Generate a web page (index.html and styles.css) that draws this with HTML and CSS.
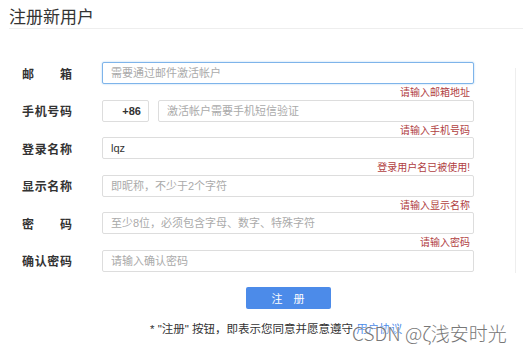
FILE: index.html
```html
<!DOCTYPE html>
<html lang="zh-CN">
<head>
  <meta charset="UTF-8">
  <meta name="viewport" content="width=device-width, initial-scale=1.0">
  <title>注册新用户</title>
  <link rel="stylesheet" href="styles.css">
</head>
<body>
  <div class="page">
    <h1 class="title">注册新用户</h1>
    <div class="content">
      <form class="form">
        <div class="field">
          <div class="field-row">
            <label class="label">邮箱</label>
            <input class="input input-focus" type="text" placeholder="需要通过邮件激活帐户">
          </div>
          <div class="tip">请输入邮箱地址</div>
        </div>
        <div class="field">
          <div class="field-row">
            <label class="label">手机号码</label>
            <div class="phone">
              <span class="prefix">+86</span>
              <input class="input" type="text" placeholder="激活帐户需要手机短信验证">
            </div>
          </div>
          <div class="tip">请输入手机号码</div>
        </div>
        <div class="field">
          <div class="field-row">
            <label class="label">登录名称</label>
            <input class="input" type="text" value="lqz">
          </div>
          <div class="tip">登录用户名已被使用!</div>
        </div>
        <div class="field">
          <div class="field-row">
            <label class="label">显示名称</label>
            <input class="input" type="text" placeholder="即昵称，不少于2个字符">
          </div>
          <div class="tip">请输入显示名称</div>
        </div>
        <div class="field">
          <div class="field-row">
            <label class="label">密码</label>
            <input class="input" type="password" placeholder="至少8位，必须包含字母、数字、特殊字符">
          </div>
          <div class="tip">请输入密码</div>
        </div>
        <div class="field">
          <div class="field-row">
            <label class="label">确认密码</label>
            <input class="input" type="password" placeholder="请输入确认密码">
          </div>
        </div>
        <div class="actions">
          <button class="btn" type="button">注 册</button>
          <p class="agree">* "注册" 按钮，即表示您同意并愿意遵守 <a href="#">用户协议</a></p>
        </div>
      </form>
      <aside class="side"></aside>
    </div>
  </div>
  <div class="watermark">CSDN @ζ浅安时光</div>
</body>
</html>
```

FILE: styles.css
```css
* {
  margin: 0;
  padding: 0;
  box-sizing: border-box;
}

body {
  font-family: "Liberation Sans", "Noto Sans CJK SC", sans-serif;
  background: #fff;
  color: #333;
  width: 523px;
  height: 357px;
  overflow: hidden;
  position: relative;
}

.page {
  padding: 8px 0 0 9px;
}

.title {
  font-size: 17px;
  font-weight: normal;
  line-height: 20px;
  color: #333;
  border-bottom: 1px solid #eee;
}

.content {
  display: flex;
}

.form {
  width: 506px;
  padding: 33px 0 0 13px;
}

.field-row {
  display: flex;
  align-items: center;
  height: 22px;
}

.label {
  width: 50px;
  margin-right: 30px;
  font-size: 12px;
  font-weight: bold;
  color: #333;
  text-align: justify;
  text-align-last: justify;
}

.input {
  width: 372px;
  height: 22px;
  border: 1px solid #ddd;
  border-radius: 2px;
  padding: 0 8px;
  font-family: inherit;
  font-size: 11px;
  color: #333;
  outline: none;
}

.input::placeholder {
  color: #aaa;
}

.input-focus {
  border-color: #7eb4ea;
  box-shadow: 0 0 2px rgba(102, 175, 233, 0.6);
}

.phone {
  display: flex;
  gap: 9px;
}

.phone .input {
  width: 316px;
}

.prefix {
  width: 47px;
  height: 22px;
  border: 1px solid #ddd;
  border-radius: 2px;
  font-size: 11px;
  font-weight: bold;
  line-height: 20px;
  text-align: right;
  padding-right: 7px;
  color: #333;
}

.tip {
  width: 448px;
  height: 15.6px;
  font-size: 10px;
  line-height: 15.6px;
  text-align: right;
  color: #b0403f;
  padding-top: 1px;
}

.actions {
  margin: 15px 0 0 80px;
  width: 372px;
  display: flex;
  flex-direction: column;
  align-items: center;
}

.btn {
  width: 85px;
  height: 22px;
  background: #4c8be9;
  color: #fff;
  border: none;
  border-radius: 2px;
  font-family: inherit;
  font-size: 11px;
  word-spacing: 8px;
}

.agree {
  align-self: flex-start;
  margin: 11px 0 0 48px;
  font-size: 11.5px;
  color: #333;
}

.agree a {
  color: #4c8be9;
  text-decoration: none;
}

.side {
  margin-top: 39px;
  width: 1px;
  height: 205px;
  border-left: 1px solid #eee;
}

.watermark {
  position: absolute;
  left: 352px;
  top: 319px;
  font-family: "Noto Sans CJK SC", sans-serif;
  font-size: 19px;
  font-weight: 300;
  color: #777;
  text-shadow: 0 0 2px #fff, 0 0 2px #fff;
}
```
